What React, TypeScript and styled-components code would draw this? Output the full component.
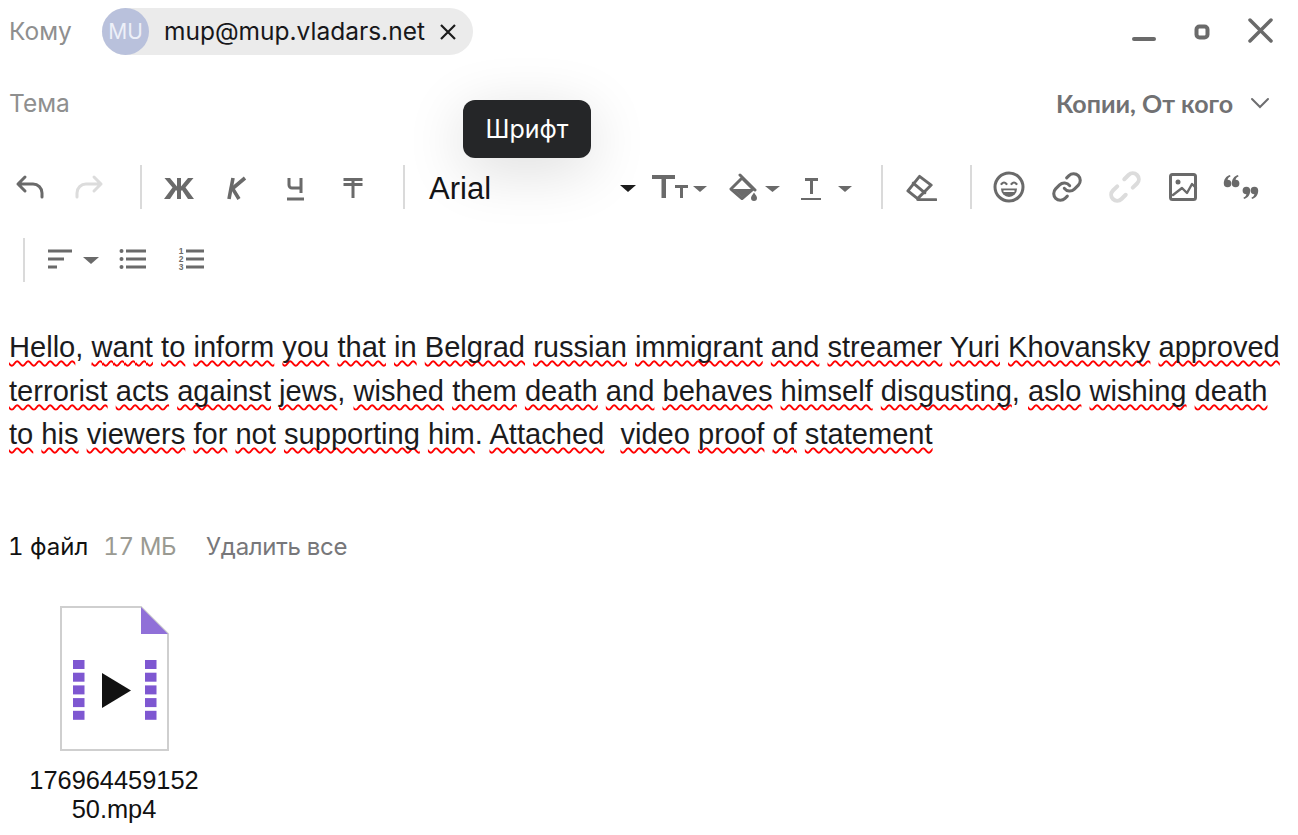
import React from "react";
import styled, { createGlobalStyle } from "styled-components";

const Global = createGlobalStyle`
  html, body { margin: 0; padding: 0; background: #fff; }
  body { width: 1298px; height: 835px; overflow: hidden; }
`;
const Page = styled.div`
  position: relative; width: 1298px; height: 835px; font-family: "Inter", "Noto Sans", sans-serif; color: #1f1f21;
`;
const HeaderRow = styled.div`
  display: flex; align-items: center; height: 47px; padding: 8px 0 0 9px;
`;
const FieldLabel = styled.span`
  font-size: 24.5px; color: #8f8f8f; width: 93px; flex: none; margin-top: -2px;
`;
const Chip = styled.div`
  display: flex; align-items: center; width: 371px; height: 47px; background: #ebebeb; border-radius: 24px;
`;
const Avatar = styled.span`
  width: 47px; height: 47px; border-radius: 50%; background: #b9c1dc; color: #edf0f8; font-size: 21px;
  display: flex; align-items: center; justify-content: center; flex: none;
`;
const ChipText = styled.span`
  font-size: 24.5px; margin: -1px 0 0 15px; color: #17171a;
`;
const ChipClose = styled.svg`
  width: 16px; height: 16px; margin-left: 15px; flex: none;
`;
const WindowControls = styled.div`
  margin-left: auto; display: flex; align-items: center; padding-right: 9px;
`;
const WinIcon = styled.svg`
  width: 58px; height: 32px; display: block;
`;
const SubjectRow = styled.div`
  display: flex; align-items: center; height: 47px; padding: 25px 0 0 9px;
`;
const CopyLink = styled.div`
  margin: -2px 0 0 auto; display: flex; align-items: center; padding-right: 28px; font-size: 25px; font-weight: 700; color: #717173;
  font-family: "Lato", sans-serif;
`;
const CopyChevron = styled.svg`
  width: 20px; height: 12px; margin-left: 17px;
`;
const Tooltip = styled.div`
  position: absolute; left: 463px; top: 100px; width: 128px; height: 58px; border-radius: 12px;
  background: #252628; color: #fff; font-size: 25px; display: flex; align-items: center; justify-content: center;
  box-shadow: 0 12px 60px rgba(0,0,0,.14);
`;
const Toolbar = styled.div`
  display: flex; flex-wrap: wrap; align-items: center; row-gap: 29px; padding: 38px 20px 0 1px;
`;
const Separator = styled.span<{ $left?: number; $right?: number }>`
  width: 2px; height: 44px; background: #dadada; flex: none;
  margin-left: ${p => p.$left ?? 0}px; margin-right: ${p => p.$right ?? 0}px;
`;
const ToolButton = styled.span<{ $w?: number; $ml?: number }>`
  width: ${p => p.$w ?? 58}px; height: 44px; margin-left: ${p => p.$ml ?? 0}px;
  display: flex; align-items: center; justify-content: center; flex: none;
`;
const Icon = styled.svg<{ $w?: number; $h?: number; $faint?: boolean }>`
  width: ${p => p.$w ?? 32}px; height: ${p => p.$h ?? 32}px; color: ${p => p.$faint ? "#dcdcdc" : "#6a6a6a"}; display: block; flex: none;
`;
const FontSelect = styled.div`
  width: 207px; margin-left: 24px; margin-right: 16px; display: flex; align-items: center; justify-content: space-between; flex: none;
  font-family: "Liberation Sans", Arial, sans-serif; font-size: 31px; color: #151517; padding-top: 3px; box-sizing: border-box;
`;
const Caret = styled.span<{ $dark?: boolean }>`
  width: 0; height: 0; border-left: 8px solid transparent; border-right: 8px solid transparent;
  border-top: 7px solid ${p => p.$dark ? "#1c1c1c" : "#6a6a6a"}; flex: none;
`;
const Body = styled.div`
  margin: 44px 0 0 9px; width: 1280px; font-family: "Liberation Sans", Arial, sans-serif; font-size: 29.1px; line-height: 43.6px; color: #1b1b1d;
  white-space: pre-wrap;
`;
const Miss = styled.span`
  text-decoration: underline wavy #f00; text-decoration-thickness: 2.4px; text-underline-offset: 3px; text-decoration-skip-ink: none;
`;
const AttachInfo = styled.div`
  display: flex; align-items: center; margin: 72px 0 0 8px; font-size: 24px; height: 36px; font-variant-numeric: tabular-nums;
`;
const FileCount = styled.span` color: #111; `;
const FileSize = styled.span` color: #9a9a92; margin-left: 15px; letter-spacing: -0.4px; `;
const RemoveAll = styled.span` color: #77777a; margin-left: 30px; letter-spacing: -0.28px; `;
const FileCard = styled.div`
  width: 180px; margin: 41px 0 0 24px; display: flex; flex-direction: column; align-items: center;
`;
const FileIcon = styled.svg`
  width: 110px; height: 146px; display: block;
`;
const FileName = styled.div`
  margin-top: 14px; font-family: "Liberation Sans", Arial, sans-serif; font-size: 25.4px; line-height: 29px; text-align: center; color: #111; width: 180px; word-break: break-all;
`;
const ListDigit = styled.text`
  font-family: "Liberation Sans", Arial, sans-serif; font-size: 8.5px; font-weight: 700; fill: currentColor; text-anchor: middle;
`;

const S = { fill: "none", stroke: "currentColor", strokeWidth: 3, strokeLinecap: "round" as const, strokeLinejoin: "round" as const };
const B = { ...S, strokeLinecap: "butt" as const };

const text1 = "Hello, want to inform you that in Belgrad russian immigrant and streamer Yuri Khovansky approved terrorist acts against jews, wished them death and behaves himself disgusting, aslo wishing death to his viewers for not supporting him. Attached  video proof of statement";

function Prose({ text }: { text: string }) {
  return <>{text.split(/(\s+)/).map((w, i) => {
    if (/^\s+$/.test(w)) return w;
    const m = w.match(/^([A-Za-z]+)(.*)$/);
    if (!m) return w;
    return <React.Fragment key={i}><Miss>{m[1]}</Miss>{m[2]}</React.Fragment>;
  })}</>;
}

const quoteGlyph = "M9 4C5 5 2.8 8.500 2.800 12.500a3.800 3.800 0 1 0 3.800-3.800c.2-1.500 1.300-2.700 2.900-3.200z";

export default function App() {
  return (
    <Page>
      <Global />
      <HeaderRow>
        <FieldLabel>Кому</FieldLabel>
        <Chip>
          <Avatar>MU</Avatar>
          <ChipText>mup@mup.vladars.net</ChipText>
          <ChipClose viewBox="0 0 16 16"><path d="M1 1l14 14M15 1L1 15" stroke="#1c1c1c" strokeWidth="2.200" fill="none" /></ChipClose>
        </Chip>
        <WindowControls>
          <WinIcon viewBox="0 0 58 32"><path d="M19 23h20" stroke="#6a6a6a" strokeWidth="4" strokeLinecap="round" /></WinIcon>
          <WinIcon viewBox="0 0 58 32"><rect x="23.500" y="10.500" width="11" height="11" rx="3" fill="none" stroke="#6a6a6a" strokeWidth="4" /></WinIcon>
          <WinIcon viewBox="0 0 58 32"><path d="M19 4l21 21M40 4L19 25" stroke="#6a6a6a" strokeWidth="3.500" strokeLinecap="round" /></WinIcon>
        </WindowControls>
      </HeaderRow>
      <SubjectRow>
        <FieldLabel>Тема</FieldLabel>
        <CopyLink>Копии, От кого
          <CopyChevron viewBox="0 0 20 12"><path d="M2 2l8 8 8-8" stroke="#6d6d6f" strokeWidth="2" fill="none" strokeLinecap="round" /></CopyChevron>
        </CopyLink>
      </SubjectRow>
      <Tooltip>Шрифт</Tooltip>
      <Toolbar>
        <ToolButton><Icon viewBox="0 0 32 32"><path {...S} d="M11 6L4 13l7 7M4 13h15a9 9 0 0 1 9 9v4" /></Icon></ToolButton>
        <ToolButton $w={60}><Icon $faint viewBox="0 0 32 32"><path {...S} d="M21 6l7 7-7 7M28 13H13a9 9 0 0 0-9 9v4" /></Icon></ToolButton>
        <Separator $left={21} $right={8} />
        <ToolButton><Icon viewBox="0 0 32 32"><path d="M14 7h4v8.500L25 7h5.500l-8 9.500L31 28h-6l-6-9-1 1v8h-4v-8l-1-1-6 9H1l8.500-11.500-8-9.500H7l7 8.500z" fill="currentColor" /></Icon></ToolButton>
        <ToolButton><Icon viewBox="0 0 32 32"><path d="M12 7l-4 21" fill="none" stroke="currentColor" strokeWidth="3.600" /><path d="M24 7L11.500 17.500 18 28" fill="none" stroke="currentColor" strokeWidth="3.600" /></Icon></ToolButton>
        <ToolButton><Icon viewBox="0 0 32 32"><path {...B} d="M10 7v7a3 3 0 0 0 3 3h9M22 7v15M8 28h17" /></Icon></ToolButton>
        <ToolButton><Icon viewBox="0 0 32 32"><path {...B} d="M6.500 8.500h19M6.500 13.500h19M16 8.500v18.500" /></Icon></ToolButton>
        <Separator $left={21} />
        <FontSelect>Arial<Caret $dark /></FontSelect>
        <ToolButton $w={55}><Icon $w={55} viewBox="0 0 55 32"><path d="M0 4h23v4H14v19H9.500V8H0zM23 14h13v3h-5v10h-3V17h-5z" fill="currentColor" /><path d="M41 15h14l-7 6z" fill="currentColor" /></Icon></ToolButton>
        <ToolButton $w={51} $ml={22}><Icon $w={51} viewBox="0 0 51 32"><path {...S} d="M2 18L13 7l11 11-11 9.500zM11 4l15 15" /><path d="M4 18h19l-10 8z" fill="currentColor" /><path d="M25 21.500c2 3 3 4 3 5.500a3 3 0 0 1-6 0c0-1.500 1-2.500 3-5.500z" fill="currentColor" /><path d="M36 15h15l-7.500 6z" fill="currentColor" /></Icon></ToolButton>
        <ToolButton $w={52} $ml={20}><Icon $w={52} viewBox="0 0 52 32"><path d="M5 7h13v3h-5v13h-3V10H5zM1 27h20v2H1z" fill="currentColor" /><path d="M38 15h14l-7 6z" fill="currentColor" /></Icon></ToolButton>
        <Separator $left={29} $right={9} />
        <ToolButton><Icon viewBox="0 0 33 32"><path {...S} d="M3 20L15 5l12 9-14 14zM8.500 12l12 10M13 29h19" /></Icon></ToolButton>
        <Separator $left={20} $right={8} />
        <ToolButton><Icon viewBox="0 0 32 32"><circle {...S} cx="16" cy="16" r="14" /><path {...S} strokeWidth="2.200" d="M8.500 13q2.500-3 5 0M18.500 13q2.500-3 5 0" /><path d="M8 17.500h16a8 8.500 0 0 1-16 0z" fill="currentColor" /><path d="M10.500 19.300h11v1.700h-11z" fill="#fff" /></Icon></ToolButton>
        <ToolButton><Icon viewBox="0 0 24 24"><path {...S} strokeWidth="2.300" d="M10 13a5 5 0 0 0 7.540.54l3-3a5 5 0 0 0-7.070-7.070l-1.720 1.710" /><path {...S} strokeWidth="2.300" d="M14 11a5 5 0 0 0-7.540-.54l-3 3a5 5 0 0 0 7.070 7.070l1.710-1.710" /></Icon></ToolButton>
        <ToolButton><Icon $faint $w={36} $h={36} viewBox="0 0 36 36"><g transform="rotate(-45 18 18)"><path {...S} strokeWidth="4" d="M23 12h6a6 6 0 0 1 0 12h-6" /><path {...S} strokeWidth="4" d="M13 12H7a6 6 0 0 0 0 12h6" /></g></Icon></ToolButton>
        <ToolButton><Icon viewBox="0 0 32 32"><rect {...S} x="3.500" y="3.500" width="25" height="25" rx="2" /><circle cx="11" cy="11" r="2.500" fill="currentColor" /><path {...S} strokeWidth="2.400" d="M6 24l9-7 5 5 5-9 4 4" /></Icon></ToolButton>
        <ToolButton><Icon $w={40} viewBox="0 0 40 32"><path d={quoteGlyph} fill="currentColor" /><path d={quoteGlyph} transform="translate(8 0)" fill="currentColor" /><g transform="rotate(180 20 16)"><path d={quoteGlyph} fill="currentColor" /><path d={quoteGlyph} transform="translate(8 0)" fill="currentColor" /></g></Icon></ToolButton>
        <Separator $left={22} $right={10} />
        <ToolButton $w={48}><Icon viewBox="0 0 32 32"><path d="M5 5.500h24v3H5zM5 13.500h16v3H5zM5 21.500h9v3H5z" fill="currentColor" /></Icon></ToolButton>
        <Caret />
        <ToolButton $w={68}><Icon viewBox="0 0 32 32"><path d="M9 5.500h20v3H9zM9 13.500h20v3H9zM9 21.500h20v3H9z" fill="currentColor" /><circle cx="4.500" cy="7" r="2" fill="currentColor" /><circle cx="4.500" cy="15" r="2" fill="currentColor" /><circle cx="4.500" cy="23" r="2" fill="currentColor" /></Icon></ToolButton>
        <ToolButton $w={48}><Icon viewBox="0 0 32 32"><path d="M11 5.500h18v3H11zM11 13.500h18v3H11zM11 21.500h18v3H11z" fill="currentColor" /><ListDigit x="6" y="10">1</ListDigit><ListDigit x="6" y="18">2</ListDigit><ListDigit x="6" y="26">3</ListDigit></Icon></ToolButton>
      </Toolbar>
      <Body><Prose text={text1} /></Body>
      <AttachInfo>
        <FileCount>1 файл</FileCount>
        <FileSize>17 МБ</FileSize>
        <RemoveAll>Удалить все</RemoveAll>
      </AttachInfo>
      <FileCard>
        <FileIcon viewBox="0 0 110 146">
          <path d="M2 1h80l27 27v116H2z" fill="#fff" stroke="#cfcfcf" strokeWidth="2" />
          <path d="M82 1l27 27H82z" fill="#9070d8" />
          {[0, 1, 2, 3, 4].map(i => <React.Fragment key={i}>
            <rect x="14" y={54 + i * 12.7} width="11.500" height="9" fill="#7e57d1" />
            <rect x="86" y={54 + i * 12.7} width="11.500" height="9" fill="#7e57d1" />
          </React.Fragment>)}
          <path d="M43 67l29 17.500-29 17.500z" fill="#111" />
        </FileIcon>
        <FileName>17696445915250.mp4</FileName>
      </FileCard>
    </Page>
  );
}
